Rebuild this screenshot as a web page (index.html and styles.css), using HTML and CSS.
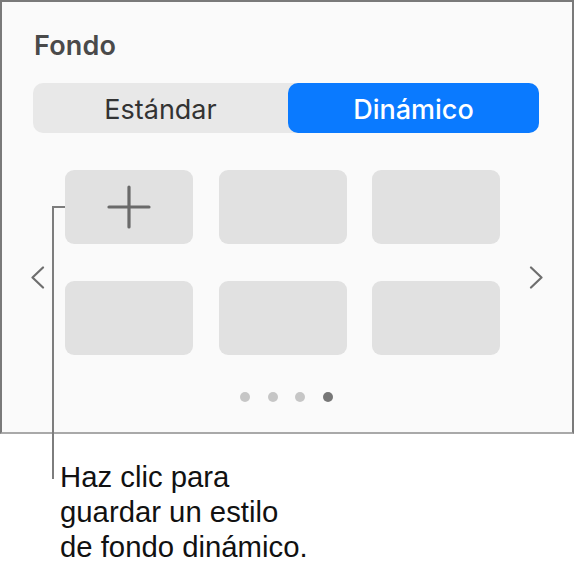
FILE: index.html
```html
<!DOCTYPE html>
<html lang="es">
<head>
<meta charset="utf-8">
<title>Fondo</title>
<link rel="stylesheet" href="styles.css">
</head>
<body>
<div class="page">
  <section class="panel">
    <h2 class="title">Fondo</h2>
    <div class="segmented">
      <div class="seg">Estándar</div>
      <div class="seg seg-active">Dinámico</div>
    </div>
    <div class="carousel">
      <svg class="chev chev-left" width="14" height="24" viewBox="0 0 14 24" aria-hidden="true">
        <polyline points="12,1.5 1.5,11.5 12,21.5" fill="none" stroke="#6e6e6e" stroke-width="2.2" stroke-linecap="round" stroke-linejoin="round"/>
      </svg>
      <div class="tiles">
        <div class="tile tile-add">
          <svg width="44" height="44" viewBox="0 0 44 44" aria-hidden="true">
            <line x1="22" y1="2" x2="22" y2="42" stroke="#6a6a6a" stroke-width="3.2" stroke-linecap="round"/>
            <line x1="2" y1="22" x2="42" y2="22" stroke="#6a6a6a" stroke-width="3.2" stroke-linecap="round"/>
          </svg>
        </div>
        <div class="tile"></div>
        <div class="tile"></div>
        <div class="tile"></div>
        <div class="tile"></div>
        <div class="tile"></div>
      </div>
      <svg class="chev chev-right" width="14" height="24" viewBox="0 0 14 24" aria-hidden="true">
        <polyline points="2,1.5 12.5,11.5 2,21.5" fill="none" stroke="#6e6e6e" stroke-width="2.2" stroke-linecap="round" stroke-linejoin="round"/>
      </svg>
    </div>
    <div class="dots">
      <span class="dot"></span>
      <span class="dot"></span>
      <span class="dot"></span>
      <span class="dot dot-active"></span>
    </div>
  </section>
  <div class="leader"></div>
  <p class="callout">Haz clic para<br>guardar un estilo<br>de fondo dinámico.</p>
</div>
</body>
</html>
```

FILE: styles.css
```css
html, body {
  margin: 0;
  padding: 0;
  background: #ffffff;
}

.page {
  position: relative;
  width: 575px;
  height: 567px;
  font-family: Inter, "Liberation Sans", sans-serif;
}

.panel {
  box-sizing: border-box;
  width: 574px;
  height: 434px;
  background: #fafafa;
  border: 2px solid #7a7a7a;
  border-bottom-color: #a9a9a9;
  padding: 28px 33px 0 31px;
  display: flex;
  flex-direction: column;
}

.title {
  margin: 0 0 0 1px;
  font-size: 27px;
  line-height: 32px;
  font-weight: 600;
  color: #4a4a4a;
  letter-spacing: 0.2px;
}

.segmented {
  margin-top: 21px;
  height: 50px;
  display: grid;
  grid-template-columns: 255px 1fr;
  background: #e8e8e8;
  border-radius: 10px;
}

.seg {
  display: flex;
  align-items: center;
  justify-content: center;
  font-size: 27px;
  color: #333333;
  border-radius: 10px;
  padding-top: 2px;
}

.seg-active {
  background: #0a7aff;
  color: #ffffff;
  font-weight: 500;
}

.carousel {
  margin-top: 37px;
  margin-left: -2px;
  display: flex;
  align-items: flex-start;
}

.chev {
  display: block;
  margin-top: 96px;
  flex: none;
}

.chev-left {
  margin-right: 20px;
}

.chev-right {
  margin-left: 29px;
}

.tiles {
  display: grid;
  grid-template-columns: 128px 128px 128px;
  grid-auto-rows: 74px;
  column-gap: 25.5px;
  row-gap: 37px;
}

.tile {
  background: #e1e1e1;
  border-radius: 9px;
}

.tile-add {
  display: flex;
  align-items: center;
  justify-content: center;
}

.tile-add svg {
  display: block;
  margin-left: -1px;
}

.dots {
  margin-top: 37px;
  display: flex;
  justify-content: center;
  gap: 17.6px;
  padding-left: 1px;
}

.dot {
  width: 10px;
  height: 10px;
  border-radius: 50%;
  background: #c6c6c6;
}

.dot-active {
  background: #777777;
}

.leader {
  position: absolute;
  left: 52px;
  top: 206px;
  width: 11px;
  height: 271px;
  border-top: 2px solid #7d7d7d;
  border-left: 2px solid #7d7d7d;
}

.callout {
  margin: 25px 0 0 60px;
  font-family: "Liberation Sans", Arial, sans-serif;
  font-size: 29.3px;
  line-height: 35px;
  color: #111111;
}
```
